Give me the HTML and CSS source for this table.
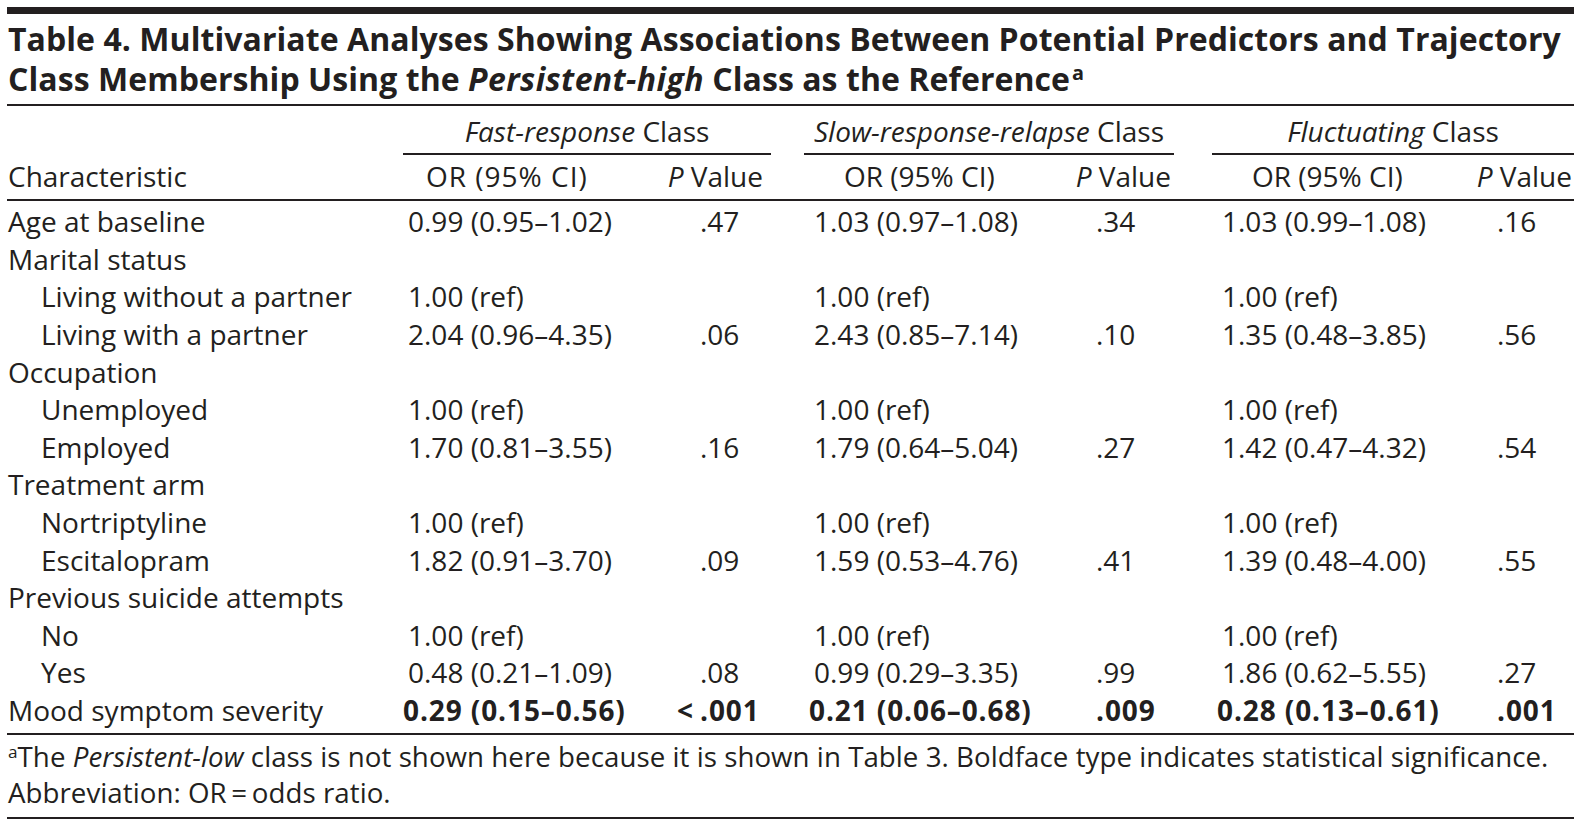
FILE: index.html
```html
<!DOCTYPE html>
<html lang="en">
<head>
<meta charset="utf-8">
<title>Table 4</title>
<link rel="stylesheet" href="styles.css">
</head>
<body>
<div class="page">
  <div class="topbar"></div>
  <h1 class="title">Table 4. Multivariate Analyses Showing Associations Between Potential Predictors and Trajectory<br>Class Membership Using the <i>Persistent-high</i> Class as the Reference<sup>a</sup></h1>
  <div class="rule"></div>
  <div class="grid">
    <div class="gh g1"><i>Fast-response</i> Class</div>
    <div class="gh g2"><i>Slow-response-relapse</i> Class</div>
    <div class="gh g3"><i>Fluctuating</i> Class</div>

    <div class="ch c0">Characteristic</div>
    <div class="ch o1 hor1">OR (95% CI)</div>
    <div class="ch p1 hp hp1"><i>P</i> Value</div>
    <div class="ch o2 hor2">OR (95% CI)</div>
    <div class="ch p2 hp hp2"><i>P</i> Value</div>
    <div class="ch o3 hor3">OR (95% CI)</div>
    <div class="ch p3 hp hp3"><i>P</i> Value</div>

    <div class="rule full"></div>

    <div class="td c0">Age at baseline</div>
    <div class="td o1">0.99 (0.95–1.02)</div><div class="td p1">.47</div>
    <div class="td o2">1.03 (0.97–1.08)</div><div class="td p2">.34</div>
    <div class="td o3">1.03 (0.99–1.08)</div><div class="td p3">.16</div>

    <div class="td c0">Marital status</div>

    <div class="td c0 ind">Living without a partner</div>
    <div class="td o1">1.00 (ref)</div>
    <div class="td o2">1.00 (ref)</div>
    <div class="td o3">1.00 (ref)</div>

    <div class="td c0 ind">Living with a partner</div>
    <div class="td o1">2.04 (0.96–4.35)</div><div class="td p1">.06</div>
    <div class="td o2">2.43 (0.85–7.14)</div><div class="td p2">.10</div>
    <div class="td o3">1.35 (0.48–3.85)</div><div class="td p3">.56</div>

    <div class="td c0">Occupation</div>

    <div class="td c0 ind">Unemployed</div>
    <div class="td o1">1.00 (ref)</div>
    <div class="td o2">1.00 (ref)</div>
    <div class="td o3">1.00 (ref)</div>

    <div class="td c0 ind">Employed</div>
    <div class="td o1">1.70 (0.81–3.55)</div><div class="td p1">.16</div>
    <div class="td o2">1.79 (0.64–5.04)</div><div class="td p2">.27</div>
    <div class="td o3">1.42 (0.47–4.32)</div><div class="td p3">.54</div>

    <div class="td c0">Treatment arm</div>

    <div class="td c0 ind">Nortriptyline</div>
    <div class="td o1">1.00 (ref)</div>
    <div class="td o2">1.00 (ref)</div>
    <div class="td o3">1.00 (ref)</div>

    <div class="td c0 ind">Escitalopram</div>
    <div class="td o1">1.82 (0.91–3.70)</div><div class="td p1">.09</div>
    <div class="td o2">1.59 (0.53–4.76)</div><div class="td p2">.41</div>
    <div class="td o3">1.39 (0.48–4.00)</div><div class="td p3">.55</div>

    <div class="td c0">Previous suicide attempts</div>

    <div class="td c0 ind">No</div>
    <div class="td o1">1.00 (ref)</div>
    <div class="td o2">1.00 (ref)</div>
    <div class="td o3">1.00 (ref)</div>

    <div class="td c0 ind">Yes</div>
    <div class="td o1">0.48 (0.21–1.09)</div><div class="td p1">.08</div>
    <div class="td o2">0.99 (0.29–3.35)</div><div class="td p2">.99</div>
    <div class="td o3">1.86 (0.62–5.55)</div><div class="td p3">.27</div>

    <div class="td c0">Mood symptom severity</div>
    <div class="td o1 b bor">0.29 (0.15–0.56)</div><div class="td p1 b"><span class="lt">&lt;</span>.001</div>
    <div class="td o2 b bor">0.21 (0.06–0.68)</div><div class="td p2 b">.009</div>
    <div class="td o3 b bor">0.28 (0.13–0.61)</div><div class="td p3 b">.001</div>

    <div class="rule full after"></div>
  </div>
  <p class="foot"><sup>a</sup>The <i>Persistent-low</i> class is not shown here because it is shown in Table 3. Boldface type indicates statistical significance.<br>Abbreviation: OR&thinsp;=&thinsp;odds ratio.</p>
  <div class="rule"></div>
</div>
</body>
</html>
```

FILE: styles.css
```css
* { box-sizing: border-box; }
html, body { margin: 0; padding: 0; background: #ffffff; }
body {
  font-family: "Open Sans", "Noto Sans", sans-serif;
  color: #231f20;
}
.page {
  width: 1580px;
  padding: 7px 6px 0 7px;
}
.topbar { height: 7px; background: #231f20; }
.rule { height: 2px; background: #231f20; }

.title {
  margin: 0;
  padding: 5.4px 0 4.6px 1px;
  font-size: 32px;
  line-height: 40px;
  font-weight: 700;
  letter-spacing: 0.06px;
  white-space: nowrap;
}
.title i { letter-spacing: 0.4px; }
.title sup, .foot sup {
  font-size: 62%;
  line-height: 0;
  vertical-align: 0.55em;
}
.title sup { margin-left: 2px; }

.grid {
  display: grid;
  grid-template-columns: 401px 292px 71px 43px 282px 78px 48px 275px 77px;
  font-size: 28px;
  white-space: nowrap;
}
.rule.full { grid-column: 1 / -1; }
.rule.after { margin-top: 5.6px; }

.c0 { grid-column: 1; padding-left: 1px; }
.o1 { grid-column: 2; }
.p1 { grid-column: 3; }
.o2 { grid-column: 5; }
.p2 { grid-column: 6; }
.o3 { grid-column: 8; }
.p3 { grid-column: 9; }

.gh {
  text-align: center;
  line-height: 34px;
  padding: 7.6px 0 5.4px;
  border-bottom: 2px solid #231f20;
}
.g1 { grid-column: 2 / span 2; margin-left: -5px; }
.g2 { grid-column: 5 / span 2; margin-left: -10px; }
.g3 { grid-column: 8 / span 2; margin-left: -10px; }

.ch {
  line-height: 34px;
  padding-top: 3.6px;
  padding-bottom: 6.4px;
}
.hor1 { padding-left: 18px; letter-spacing: 1px; }
.hor2 { padding-left: 30px; }
.hor3 { padding-left: 30px; }
.hp { margin-left: -40px; text-align: right; }
.hp1 { padding-right: 8px; }
.hp2 { padding-right: 3px; }
.hp3 { padding-right: 2px; }

.td {
  line-height: 34px;
  padding-top: 3.3px;
  padding-bottom: 0.3px;
}
.td.c0.ind { padding-left: 34px; }
.b { font-weight: 700; letter-spacing: 0.9px; }
.bor { margin-left: -5px; }
.lt { display: inline-block; width: 23px; margin-left: -23px; }

.foot {
  margin: 0;
  padding: 4.6px 0 7px 1px;
  font-size: 27.7px;
  line-height: 35.5px;
  letter-spacing: 0.04px;
  white-space: nowrap;
}
```
